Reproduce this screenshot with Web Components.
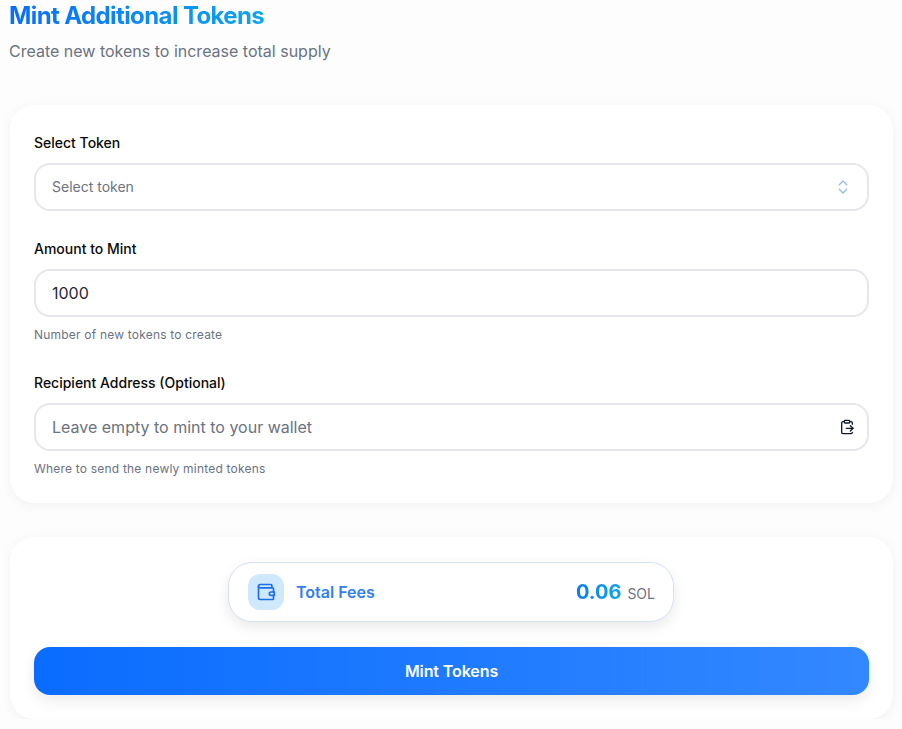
<!DOCTYPE html>
<html>
<head>
<meta charset="utf-8">
<title>Mint Additional Tokens</title>
<style>
  html, body { margin: 0; background: #fdfdfd; }
  body { font-family: Inter, "Liberation Sans", sans-serif; overflow: hidden; }
</style>
</head>
<body>
<mint-page>
  <page-head slot="head" heading="Mint Additional Tokens" sub="Create new tokens to increase total supply"></page-head>

  <form-card>
    <form-field label="Select Token">
      <select-box placeholder="Select token"></select-box>
    </form-field>
    <form-field label="Amount to Mint" hint="Number of new tokens to create">
      <text-box value="1000"></text-box>
    </form-field>
    <form-field label="Recipient Address (Optional)" hint="Where to send the newly minted tokens">
      <text-box placeholder="Leave empty to mint to your wallet" paste></text-box>
    </form-field>
  </form-card>

  <form-card compact>
    <fee-pill label="Total Fees" amount="0.06" unit="SOL"></fee-pill>
    <mint-button>Mint Tokens</mint-button>
  </form-card>
</mint-page>

<script>
class MintPage extends HTMLElement {
  constructor() {
    super();
    this.attachShadow({ mode: "open" });
    this.shadowRoot.innerHTML = `
      <style>
        :host { display: block; padding: 0 9px 0 10px; }
        .stack { display: flex; flex-direction: column; gap: 34px; }
      </style>
      <slot name="head"></slot>
      <div class="stack"><slot></slot></div>
    `;
  }
}

class PageHead extends HTMLElement {
  constructor() {
    super();
    this.attachShadow({ mode: "open" });
    this.shadowRoot.innerHTML = `
      <style>
        :host { display: block; margin-left: -1px; height: 105px; }
        h1 {
          margin: 0; font-size: 24px; line-height: 32px; font-weight: 700;
          letter-spacing: -0.6px; width: max-content;
          background: linear-gradient(90deg, #0a6cff, #0ea5e9);
          -webkit-background-clip: text; background-clip: text; color: transparent;
        }
        p { margin: 7px 0 0; font-size: 16px; line-height: 24px; color: #6b7280; }
      </style>
      <h1></h1>
      <p></p>
    `;
  }
  connectedCallback() {
    this.shadowRoot.querySelector("h1").textContent = this.getAttribute("heading");
    this.shadowRoot.querySelector("p").textContent = this.getAttribute("sub");
  }
}

class FormCard extends HTMLElement {
  constructor() {
    super();
    this.attachShadow({ mode: "open" });
    this.shadowRoot.innerHTML = `
      <style>
        :host {
          display: flex; flex-direction: column; gap: 28px;
          padding: 27px 23px 23px; background: #fff; border-radius: 24px;
          border: 1px solid #fff;
          box-shadow: 0 2px 12px rgba(0, 0, 0, 0.05);
        }
        :host([compact]) { gap: 25px; padding: 24px 23px 23px; }
      </style>
      <slot></slot>
    `;
  }
}

class FormField extends HTMLElement {
  constructor() {
    super();
    this.attachShadow({ mode: "open" });
    this.shadowRoot.innerHTML = `
      <style>
        :host { display: block; }
        label { display: block; font-size: 14px; line-height: 20px; font-weight: 500; color: #0a0a0a; margin-bottom: 10px; }
        small { display: block; font-size: 12px; line-height: 16px; letter-spacing: 0.2px; color: #6b7280; margin: 10px 0 2px; }
        small:empty { display: none; }
      </style>
      <label></label>
      <slot></slot>
      <small></small>
    `;
  }
  connectedCallback() {
    this.shadowRoot.querySelector("label").textContent = this.getAttribute("label");
    this.shadowRoot.querySelector("small").textContent = this.getAttribute("hint") || "";
  }
}

class SelectBox extends HTMLElement {
  constructor() {
    super();
    this.attachShadow({ mode: "open" });
    this.shadowRoot.innerHTML = `
      <style>
        :host {
          display: flex; align-items: center; justify-content: space-between;
          box-sizing: border-box; height: 48px; padding: 0 15px 0 16px;
          border: 2px solid #e5e7eb; border-radius: 16px; background: #fff;
          font-size: 14px; color: #6b7280;
        }
        span { margin-bottom: 2px; }
        svg { display: block; width: 18px; height: 18px; fill: none; stroke: #8fb4ef; stroke-width: 1.6; stroke-linecap: round; stroke-linejoin: round; }
      </style>
      <span></span>
      <svg viewBox="0 0 24 24"><path d="m7 15 5 5 5-5"/><path d="m7 9 5-5 5 5"/></svg>
    `;
  }
  connectedCallback() {
    this.shadowRoot.querySelector("span").textContent = this.getAttribute("placeholder");
  }
}

class TextBox extends HTMLElement {
  constructor() {
    super();
    this.attachShadow({ mode: "open" });
    this.shadowRoot.innerHTML = `
      <style>
        :host {
          display: flex; align-items: center; justify-content: space-between;
          box-sizing: border-box; height: 48px; padding: 0 12px 0 16px;
          border: 2px solid #e5e7eb; border-radius: 16px; background: #fff;
          font-size: 16px; color: #1f2937;
        }
        .ph { color: #6b7280; }
        svg { display: block; width: 16px; height: 16px; fill: none; stroke: #111827; stroke-width: 2; stroke-linecap: round; stroke-linejoin: round; }
      </style>
      <span></span>
    `;
  }
  connectedCallback() {
    const span = this.shadowRoot.querySelector("span");
    const value = this.getAttribute("value");
    span.textContent = value || this.getAttribute("placeholder");
    if (!value) span.className = "ph";
    if (this.hasAttribute("paste")) {
      this.shadowRoot.innerHTML += `
        <svg viewBox="0 0 24 24">
          <rect x="8" y="2" width="8" height="4" rx="1"/>
          <path d="M8 4H6a2 2 0 0 0-2 2v14a2 2 0 0 0 2 2h12a2 2 0 0 0 2-2"/>
          <path d="M16 4h2a2 2 0 0 1 2 2v2"/>
          <path d="M11 14h10"/>
          <path d="m17 10 4 4-4 4"/>
        </svg>`;
    }
  }
}

class FeePill extends HTMLElement {
  constructor() {
    super();
    this.attachShadow({ mode: "open" });
    this.shadowRoot.innerHTML = `
      <style>
        :host {
          display: flex; align-items: center; justify-content: space-between;
          box-sizing: border-box; width: 446px; height: 60px; margin: 0 195px 0 194px;
          padding: 0 18px 0 19px; background: #fff; border-radius: 24px;
          border: 1px solid #d5e2f5;
          box-shadow: 0 5px 14px rgba(0, 0, 0, 0.09);
        }
        .left { display: flex; align-items: center; gap: 12px; }
        .ico {
          width: 36px; height: 36px; border-radius: 12px; background: #cfe8fb;
          display: flex; align-items: center; justify-content: center;
        }
        svg { width: 20px; height: 20px; fill: none; stroke: #1b6fe8; stroke-width: 2; stroke-linecap: round; stroke-linejoin: round; }
        .label { font-size: 16px; font-weight: 600; color: #2f80ed; }
        .right { display: flex; align-items: baseline; gap: 6px; }
        .amt {
          font-size: 20px; font-weight: 700; line-height: 28px;
          background: linear-gradient(90deg, #0a7cf0, #0ea5e9);
          -webkit-background-clip: text; background-clip: text; color: transparent;
        }
        .unit { font-size: 14px; color: #6b7280; }
      </style>
      <div class="left">
        <div class="ico">
          <svg viewBox="0 0 24 24">
            <path d="M19 7V4a1 1 0 0 0-1-1H5a2 2 0 0 0 0 4h15a1 1 0 0 1 1 1v4"/>
            <path d="M3 5v14a2 2 0 0 0 2 2h15a1 1 0 0 0 1-1v-4"/>
            <path d="M18 12a2 2 0 0 0 0 4h4v-4Z"/>
          </svg>
        </div>
        <span class="label"></span>
      </div>
      <div class="right"><span class="amt"></span><span class="unit"></span></div>
    `;
  }
  connectedCallback() {
    this.shadowRoot.querySelector(".label").textContent = this.getAttribute("label");
    this.shadowRoot.querySelector(".amt").textContent = this.getAttribute("amount");
    this.shadowRoot.querySelector(".unit").textContent = this.getAttribute("unit");
  }
}

class MintButton extends HTMLElement {
  constructor() {
    super();
    this.attachShadow({ mode: "open" });
    this.shadowRoot.innerHTML = `
      <style>
        :host {
          display: flex; align-items: center; justify-content: center;
          height: 48px; border-radius: 16px; cursor: pointer;
          background: linear-gradient(90deg, #0a6cff, #3388ff);
          color: #fff; font-size: 16px; font-weight: 600; letter-spacing: -0.1px;
          box-shadow: 0 6px 14px rgba(0, 0, 0, 0.08);
        }
      </style>
      <slot></slot>
    `;
  }
}

customElements.define("mint-page", MintPage);
customElements.define("page-head", PageHead);
customElements.define("form-card", FormCard);
customElements.define("form-field", FormField);
customElements.define("select-box", SelectBox);
customElements.define("text-box", TextBox);
customElements.define("fee-pill", FeePill);
customElements.define("mint-button", MintButton);
</script>
</body>
</html>
